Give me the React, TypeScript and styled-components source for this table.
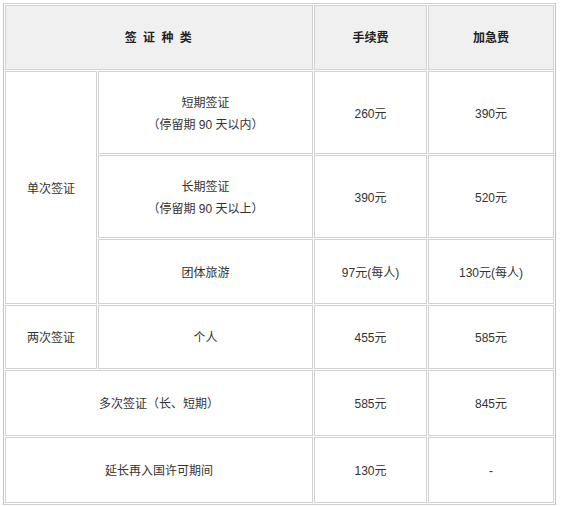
import React from "react";
import styled, { createGlobalStyle } from "styled-components";

const Global = createGlobalStyle`
  html, body { margin: 0; padding: 0; background: #fff; }
  body { font-family: "Liberation Sans", "Noto Sans CJK SC", sans-serif; }
`;

const Wrap = styled.div`
  padding: 3px 0 0 3px;
`;

const Table = styled.table`
  width: 553px;
  table-layout: fixed;
  border-collapse: separate;
  border-spacing: 1px;
  border: 1px solid #cfcfcf;
  border-left-color: #c4c4c4;
  border-right-color: #c4c4c4;
`;

const HeadCell = styled.th<{ $h?: number }>`
  height: ${(p) => (p.$h ?? 64) - 2}px;
  background: #f0f0f0;
  border: 1px solid #d2d2d2;
  padding: 0;
  text-align: center;
  vertical-align: middle;
  font-size: 12px;
  font-weight: bold;
  color: #222;
  line-height: 20px;
`;

const Cell = styled.td<{ $h?: number }>`
  height: ${(p) => (p.$h ?? 64) - 4}px;
  border: 1px solid #d2d2d2;
  padding: 2px 0 0;
  text-align: center;
  vertical-align: middle;
  font-size: 12px;
  color: #333;
  line-height: 22px;
`;

const Spaced = styled.span`
  letter-spacing: 1.5px;
`;

const Line = styled.div``;

export default function App() {
  return (
    <>
      <Global />
      <Wrap>
        <Table>
          <colgroup>
            <col style={{ width: 92 }} />
            <col style={{ width: 215 }} />
            <col style={{ width: 113 }} />
            <col style={{ width: 126 }} />
          </colgroup>
          <thead>
            <tr>
              <HeadCell colSpan={2} $h={65}>
                <Spaced>签 证 种 类</Spaced>
              </HeadCell>
              <HeadCell $h={65}>手续费</HeadCell>
              <HeadCell $h={65}>加急费</HeadCell>
            </tr>
          </thead>
          <tbody>
            <tr>
              <Cell rowSpan={3}>单次签证</Cell>
              <Cell $h={83}>
                <Line>短期签证</Line>
                <Line>（停留期 90 天以内）</Line>
              </Cell>
              <Cell $h={83}>260元</Cell>
              <Cell $h={83}>390元</Cell>
            </tr>
            <tr>
              <Cell $h={83}>
                <Line>长期签证</Line>
                <Line>（停留期 90 天以上）</Line>
              </Cell>
              <Cell $h={83}>390元</Cell>
              <Cell $h={83}>520元</Cell>
            </tr>
            <tr>
              <Cell $h={65}>团体旅游</Cell>
              <Cell $h={65}>97元(每人)</Cell>
              <Cell $h={65}>130元(每人)</Cell>
            </tr>
            <tr>
              <Cell $h={64}>两次签证</Cell>
              <Cell $h={64}>个人</Cell>
              <Cell $h={64}>455元</Cell>
              <Cell $h={64}>585元</Cell>
            </tr>
            <tr>
              <Cell colSpan={2} $h={66}>多次签证（长、短期）</Cell>
              <Cell $h={66}>585元</Cell>
              <Cell $h={66}>845元</Cell>
            </tr>
            <tr>
              <Cell colSpan={2} $h={66}>延长再入国许可期间</Cell>
              <Cell $h={66}>130元</Cell>
              <Cell $h={66}>-</Cell>
            </tr>
          </tbody>
        </Table>
      </Wrap>
    </>
  );
}
